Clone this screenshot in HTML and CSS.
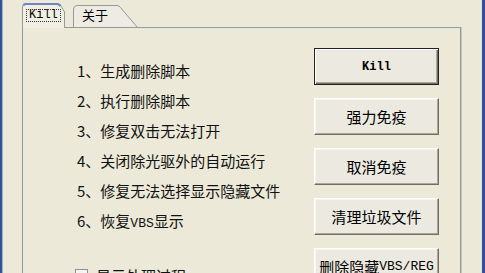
FILE: index.html
```html
<!DOCTYPE html>
<html>
<head>
<meta charset="utf-8">
<link rel="stylesheet" href="styles.css">
</head>
<body>
<div class="frame-l"></div>
<div class="main">
  <div class="tabs">
    <div class="tab tab-sel">
      <svg class="tab-shape" width="43" height="25" viewBox="0 0 43 25">
        <path d="M0.5 25 V4 Q0.5 1 3.5 1 H35 Q37.5 1 39 3 L42.5 9 V25" fill="#F1EFE4" stroke="#919B9C"/>
        <path d="M1.5 2.5 Q2 1 4 1 H35 Q37 1 38.5 3" fill="none" stroke="#6F86C0" stroke-width="2.2"/>
      </svg>
      <span class="tab-label tab-focus">Kill</span>
    </div>
    <div class="tab tab-off">
      <svg class="tab-shape" width="65" height="22" viewBox="0 0 65 22">
        <path d="M0.5 22 V5 Q0.5 0.5 5 0.5 H44 Q46 0.5 47.5 2.5 L64 22" fill="#EEECE2" stroke="#919B9C"/>
      </svg>
      <span class="tab-label tab-cjk">关于</span>
    </div>
  </div>
  <div class="panel">
    <div class="list">
      <div class="row">1、生成删除脚本</div>
      <div class="row">2、执行删除脚本</div>
      <div class="row">3、修复双击无法打开</div>
      <div class="row">4、关闭除光驱外的自动运行</div>
      <div class="row">5、修复无法选择显示隐藏文件</div>
      <div class="row">6、恢复<span class="lat">VBS</span>显示</div>
      <div class="check-row"><span class="box"></span><span>显示处理过程</span></div>
    </div>
    <div class="buttons">
      <div class="btn btn-default"><span class="lat">Kill</span></div>
      <div class="btn">强力免疫</div>
      <div class="btn">取消免疫</div>
      <div class="btn">清理垃圾文件</div>
      <div class="btn">删除隐藏<span class="lat">VBS/REG</span></div>
    </div>
  </div>
</div>
<div class="frame-r"></div>
</body>
</html>
```
FILE: styles.css
```css
html, body {
  margin: 0;
  padding: 0;
}
body {
  width: 485px;
  height: 273px;
  overflow: hidden;
  display: flex;
  background: #ECE9D8;
  font-family: "Noto Sans CJK SC", sans-serif;
  color: #111;
}
.frame-l {
  width: 3px;
  flex: none;
  background: linear-gradient(to right, #2F4C8C 0, #3D5C9C 2px, #9DB0D6 2px);
}
.frame-r {
  width: 4px;
  flex: none;
  background: linear-gradient(to right, #D6DFEF 0, #D6DFEF 1px, #3A5896 1px, #2F4B88 4px);
}
.main {
  flex: 1;
  padding: 3px 20px 0 19px;
  display: flex;
  flex-direction: column;
}
.tabs {
  display: flex;
  align-items: flex-end;
  height: 25px;
  margin-bottom: -1px;
  position: relative;
  z-index: 1;
}
.tab {
  display: grid;
}
.tab > * {
  grid-area: 1 / 1;
}
.tab-shape {
  display: block;
}
.tab-sel {
  width: 43px;
  height: 25px;
}
.tab-off {
  width: 65px;
  height: 22px;
  margin-left: 8px;
  margin-bottom: 1px;
}
.tab-label {
  align-self: start;
  justify-self: start;
}
.tab-focus {
  font-family: "Liberation Mono", monospace;
  font-size: 12px;
  line-height: 11px;
  margin: 7px 0 0 5px;
  padding: 0 2px;
  outline: 1px dotted #333;
  outline-offset: 0;
  color: #000;
}
.tab-cjk {
  font-size: 13px;
  line-height: 14px;
  margin: 3px 0 0 9px;
  color: #000;
}
.panel {
  flex: 1;
  border: 1px solid #919B9C;
  border-bottom: none;
  box-shadow: 1px 0 0 #C9C6B6;
  background: #ECE9D8;
  display: grid;
  grid-template-columns: 1fr 146px;
}
.list {
  padding: 28px 0 0 54px;
  font-size: 15px;
}
.row {
  height: 30px;
  line-height: 30px;
  white-space: nowrap;
}
.lat {
  font-family: "Liberation Mono", monospace;
  font-size: 13px;
}
.check-row {
  display: flex;
  align-items: center;
  gap: 8px;
  height: 30px;
  margin-top: 24px;
  margin-left: -2px;
}
.box {
  width: 11px;
  height: 11px;
  border: 1px solid #8E8F8F;
  background: #F4F4F0;
  flex: none;
}
.buttons {
  padding: 20px 21px 0 0;
  display: flex;
  flex-direction: column;
  gap: 13px;
}
.btn {
  height: 37px;
  box-sizing: border-box;
  display: flex;
  align-items: center;
  justify-content: center;
  font-size: 15px;
  color: #000;
  background: #ECEAE0;
  border: 1px solid;
  border-color: #FFFFFF #716F64 #716F64 #FFFFFF;
  box-shadow: inset -1px -1px 0 #ACA899, inset 1px 1px 0 #F6F5F0;
  white-space: nowrap;
}
.btn-default {
  border: 1px solid #222;
  box-shadow: inset 1px 1px 0 #FFFFFF, inset -1px -1px 0 #716F64, inset -2px -2px 0 #ACA899;
}
.btn-default .lat {
  font-size: 12px;
  font-weight: bold;
}
```
